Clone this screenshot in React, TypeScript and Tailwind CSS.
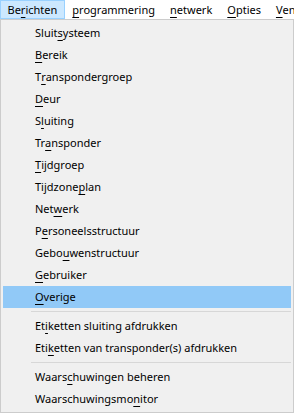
const FONT = "font-['Segoe_UI','Noto_Sans','Open_Sans',sans-serif]";

// label with mnemonic index
type Item = { label: string; u: number } | "sep";

const TOP: { label: string; u: number }[] = [
  { label: "Berichten", u: 2 },
  { label: "programmering", u: 0 },
  { label: "netwerk", u: 0 },
  { label: "Opties", u: 0 },
  { label: "Venster", u: 0 },
];

const ITEMS: Item[] = [
  { label: "Sluitsysteem", u: 5 },
  { label: "Bereik", u: 0 },
  { label: "Transpondergroep", u: 1 },
  { label: "Deur", u: 0 },
  { label: "Sluiting", u: 1 },
  { label: "Transponder", u: 2 },
  { label: "Tijdgroep", u: 0 },
  { label: "Tijdzoneplan", u: 8 },
  { label: "Netwerk", u: 3 },
  { label: "Personeelsstructuur", u: 1 },
  { label: "Gebouwenstructuur", u: 4 },
  { label: "Gebruiker", u: 0 },
  { label: "Overige", u: 0 },
  "sep",
  { label: "Etiketten sluiting afdrukken", u: 2 },
  { label: "Etiketten van transponder(s) afdrukken", u: 3 },
  "sep",
  { label: "Waarschuwingen beheren", u: 5 },
  { label: "Waarschuwingsmonitor", u: 15 },
];

function Mn({ label, u }: { label: string; u: number }) {
  return (
    <>
      {label.slice(0, u)}
      <span className="underline underline-offset-[3px]">{label[u]}</span>
      {label.slice(u + 1)}
    </>
  );
}

export default function App() {
  return (
    <div className={`w-[294px] h-[413px] overflow-hidden bg-[#f0f0f0] text-[11px] text-black ${FONT}`}>
      {/* Menu bar */}
      <div className="h-[19px] bg-white flex items-stretch whitespace-nowrap">
        {TOP.map((t, i) => (
          <div
            key={t.label}
            className={[
              "flex items-center px-[6.5px] leading-none",
              i === 0 ? "bg-[#cce8ff] border border-[#99d1ff]" : "border border-transparent",
            ].join(" ")}
          >
            <Mn label={t.label} u={t.u} />
          </div>
        ))}
      </div>

      {/* Dropdown */}
      <div className="h-[394px] border border-[#cccccc] bg-[#f0f0f0] p-[2px]">
        {ITEMS.map((it, i) =>
          it === "sep" ? (
            <div key={i} className="h-[7px] flex items-center pl-[28px]">
              <div className="w-full h-px bg-[#d7d7d7]" />
            </div>
          ) : (
            <div
              key={it.label}
              className={[
                "h-[22px] flex items-center pl-[32px] whitespace-nowrap",
                it.label === "Overige" ? "bg-[#91c9f7]" : "",
              ].join(" ")}
            >
              <Mn label={it.label} u={it.u} />
            </div>
          ),
        )}
      </div>
    </div>
  );
}
